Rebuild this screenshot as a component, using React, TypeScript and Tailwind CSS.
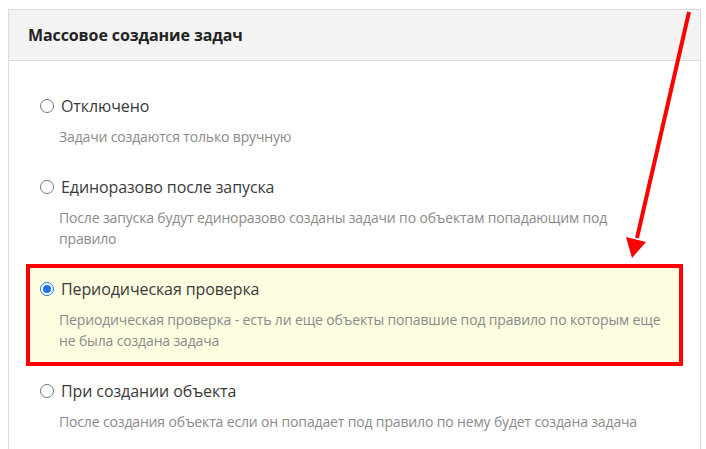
const OPTIONS = [
  {
    id: "off",
    label: "Отключено",
    description: "Задачи создаются только вручную",
  },
  {
    id: "once",
    label: "Единоразово после запуска",
    description:
      "После запуска будут единоразово созданы задачи по объектам попадающим под правило",
  },
  {
    id: "periodic",
    label: "Периодическая проверка",
    description:
      "Периодическая проверка - есть ли еще объекты попавшие под правило по которым еще не была создана задача",
  },
  {
    id: "oncreate",
    label: "При создании объекта",
    description:
      "После создания объекта если он попадает под правило по нему будет создана задача",
  },
];

function Radio({ checked }: { checked: boolean }) {
  return checked ? (
    <span className="flex size-[14px] shrink-0 items-center justify-center rounded-full border-[1.5px] border-[#1a73e8] bg-white">
      <span className="size-[8px] rounded-full bg-[#1a73e8]" />
    </span>
  ) : (
    <span className="size-[14px] shrink-0 rounded-full border border-[#767676] bg-white" />
  );
}

export default function App() {
  const selected = "periodic";

  return (
    <div
      className="relative h-[449px] w-[706px] overflow-hidden bg-white pl-[8px] pr-[5px] pt-[9px]"
      style={{ fontFamily: '"Open Sans", "Liberation Sans", sans-serif' }}
    >
      <div className="h-[460px] border border-[#dcdcdc]">
        <div className="flex h-[51px] items-center border-b border-[#dcdcdc] bg-[#f3f3f3] pl-[19px]">
          <h2 className="text-[16px] font-bold tracking-[-0.1px] text-[#222]">
            Массовое создание задач
          </h2>
        </div>

        <div className="pt-[20px]">
          {OPTIONS.map((opt) => {
            const active = opt.id === selected;
            return (
              <div
                key={opt.id}
                className={`mx-[17px] border-4 pb-[11px] pl-[10px] pr-[15px] pt-[9px] ${
                  active ? "border-[#ff0000] bg-[#fdfde0]" : "border-transparent"
                }`}
              >
                <label className="flex h-6 items-center gap-[7px]">
                  <Radio checked={active} />
                  <span className="text-[16px] tracking-[-0.1px] text-[#3a3a3a]">{opt.label}</span>
                </label>
                <p className="mt-[8px] pl-[19px] text-[14px] leading-[21px] tracking-[-0.15px] text-[#8a8a8a]">
                  {opt.description}
                </p>
              </div>
            );
          })}
        </div>
      </div>

      <svg
        className="pointer-events-none absolute inset-0"
        width="706"
        height="449"
        viewBox="0 0 706 449"
      >
        <line x1="689" y1="12" x2="637" y2="238" stroke="#ff0000" strokeWidth="4" />
        <polygon points="632,258 626,237 646,242" fill="#ff0000" />
      </svg>
    </div>
  );
}
